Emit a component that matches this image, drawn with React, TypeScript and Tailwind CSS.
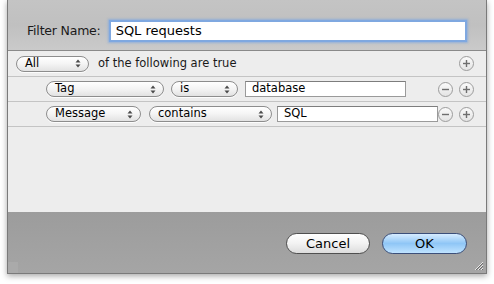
import React from 'react';

const font = { fontFamily: '"Lucida Grande", "DejaVu Sans", sans-serif' };

function Arrows() {
  return (
    <svg width="6" height="9" viewBox="0 0 6 9" className="shrink-0">
      <path d="M3 0.5 L5.5 3.5 H0.5 Z" fill="#4a4a4a" />
      <path d="M3 8.5 L5.5 5.5 H0.5 Z" fill="#4a4a4a" />
    </svg>
  );
}

function Popup({ label, w }: { label: string; w: string }) {
  return (
    <div className={`${w} h-[16px] rounded-full border border-[#8d8d8d] bg-gradient-to-b from-white via-[#f4f4f4] to-[#e2e2e2] flex items-center justify-between pl-[8px] pr-[7px] text-[11.5px] text-black shadow-[0_1px_0_rgba(255,255,255,0.8)]`}>
      <span className="leading-none">{label}</span>
      <Arrows />
    </div>
  );
}

function Field({ value, w }: { value: string; w: string }) {
  return (
    <div className={`${w} h-[16px] bg-white border border-[#9a9a9a] border-t-[#7d7d7d] flex items-center px-[6px] text-[11.5px] text-black`}>
      <span className="leading-none">{value}</span>
    </div>
  );
}

function Round({ kind }: { kind: 'plus' | 'minus' }) {
  return (
    <div className="w-[15px] h-[15px] rounded-full border border-[#9c9c9c] bg-gradient-to-b from-[#fafafa] to-[#e4e4e4] flex items-center justify-center">
      <svg width="9" height="9" viewBox="0 0 9 9">
        <path d="M1 4.5 H8" stroke="#6e6e6e" strokeWidth="1.4" />
        {kind === 'plus' && <path d="M4.5 1 V8" stroke="#6e6e6e" strokeWidth="1.4" />}
      </svg>
    </div>
  );
}

export default function App() {
  return (
    <div className="w-[494px] h-[284px] bg-white" style={font}>
      <div className="ml-[7px] w-[480px] h-[274px] flex flex-col border-x border-b border-[#7a7a7a] shadow-[0_2px_6px_rgba(0,0,0,0.35)] overflow-hidden relative">
        {/* header */}
        <div className="h-[50px] shrink-0 bg-gradient-to-b from-[#c4c4c4] via-[#c0c0c0] to-[#cacaca] flex items-start pt-[20px] pl-[19px] pr-[19px]">
          <span className="text-[12.5px] text-[#1a1a1a] mr-[8px] mt-[2px] tracking-[-0.2px]">Filter Name:</span>
          <div className="flex-1 h-[22px] bg-white border-[2px] border-[#7fa8e0] shadow-[0_0_2px_1px_rgba(110,160,230,0.6)] flex items-center px-[5px] text-[13px] text-black">
            SQL requests
          </div>
        </div>
        {/* rules panel */}
        <div className="h-[162px] shrink-0 bg-[#ededed] border-t border-[#8a8a8a] flex flex-col">
          <div className="h-[26px] border-b border-[#c4c4c4] flex items-center pl-[8px] pr-[12px]">
            <Popup label="All" w="w-[73px]" />
            <span className="ml-[9px] text-[11.5px] text-[#1a1a1a]">of the following are true</span>
            <div className="ml-auto"><Round kind="plus" /></div>
          </div>
          <div className="h-[25px] border-b border-[#c4c4c4] flex items-center pl-[38px] pr-[12px]">
            <Popup label="Tag" w="w-[118px]" />
            <div className="ml-[7px]"><Popup label="is" w="w-[67px]" /></div>
            <div className="ml-[7px]"><Field value="database" w="w-[161px]" /></div>
            <div className="ml-auto flex gap-[6px]"><Round kind="minus" /><Round kind="plus" /></div>
          </div>
          <div className="h-[25px] border-b border-[#c4c4c4] flex items-center pl-[38px] pr-[12px]">
            <Popup label="Message" w="w-[95px]" />
            <div className="ml-[8px]"><Popup label="contains" w="w-[123px]" /></div>
            <div className="ml-[5px]"><Field value="SQL" w="w-[161px]" /></div>
            <div className="ml-auto flex gap-[6px]"><Round kind="minus" /><Round kind="plus" /></div>
          </div>
        </div>
        {/* bottom bar */}
        <div className="flex-1 bg-gradient-to-b from-[#9c9c9c] to-[#a5a5a5] flex items-start justify-end pt-[21px] pr-[19px] gap-[12px] relative">
          <button className="w-[84px] h-[21px] rounded-full border border-[#4f4f4f] bg-gradient-to-b from-white via-[#f2f2f2] to-[#dcdcdc] text-[13px] text-black leading-none">
            Cancel
          </button>
          <button className="w-[85px] h-[21px] rounded-full border border-[#3b4f7a] bg-gradient-to-b from-[#d6ecff] via-[#8fc6f6] to-[#bfe3ff] text-[13px] text-black leading-none">
            OK
          </button>
          <div className="absolute left-0 bottom-0 w-[10px] h-[11px] bg-[#aaaaaa]" />
          <svg className="absolute right-[2px] bottom-[2px]" width="11" height="11" viewBox="0 0 11 11">
            <path d="M10 2 L2 10 M10 5 L5 10 M10 8 L8 10" stroke="#e8e8e8" strokeWidth="1" />
            <path d="M10 3 L3 10 M10 6 L6 10 M10 9 L9 10" stroke="#6a6a6a" strokeWidth="1" />
          </svg>
        </div>
      </div>
    </div>
  );
}
